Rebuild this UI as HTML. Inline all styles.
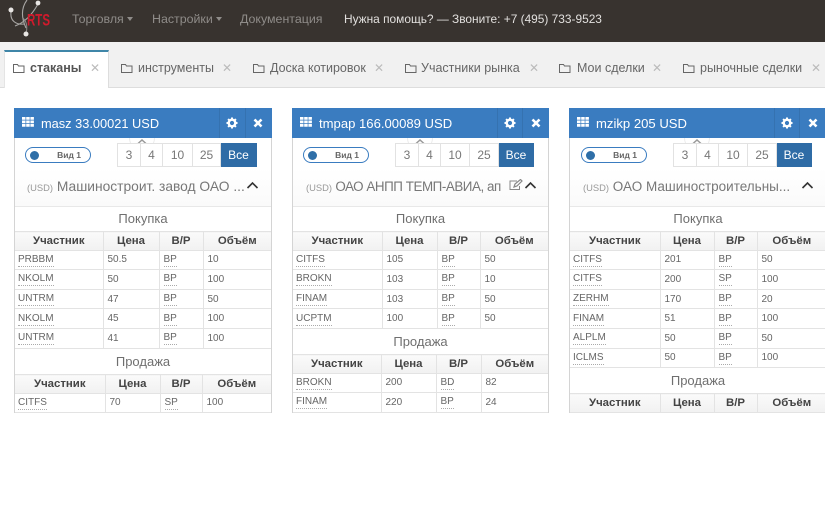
<!DOCTYPE html>
<html lang="ru"><head><meta charset="utf-8"><title>stakany</title>
<style>
*{box-sizing:border-box}
html,body{margin:0;padding:0;width:825px;height:525px;overflow:hidden;background:#fff;font-family:"Liberation Sans","DejaVu Sans",sans-serif;color:#666}
#w{position:absolute;left:0;top:0;width:825px;height:525px;overflow:hidden;filter:blur(.3px)}
.abs,.nav,.tab,.tx{position:absolute;white-space:nowrap}
#top{position:absolute;left:0;top:0;width:825px;height:42px;background:#38332f;box-shadow:0 1px 2px rgba(0,0,0,.5)}
.nav{top:12px;font-size:12.4px;line-height:15px;color:#8f8c89}
.nav i{display:inline-block;width:0;height:0;border:3.5px solid transparent;border-top:4px solid #8f8c89;border-bottom:0;margin-left:3px;vertical-align:2px}
#bar{position:absolute;left:0;top:42px;width:825px;height:46px;background:#f1f1f1;border-bottom:1px solid #ddd}
#act{position:absolute;left:4px;top:50px;width:105px;height:38px;background:#fff;border-top:2px solid #3f86a8;border-left:1px solid #e4e4e4;border-right:1px solid #ddd}
.tab{top:60px;font-size:12.5px;line-height:16px;color:#666}
.x{position:absolute;top:60px;font-size:12px;line-height:16px;color:#bbb;font-family:"DejaVu Sans",sans-serif}
.fold{position:absolute;top:63px}
.p{position:absolute;top:108px;height:305px;background:#fff;border:1px solid #d4d4d4;border-top:0}
.h{position:absolute;left:-1px;right:-1px;top:0;height:30px;background:#3a7cc0}
.h b{position:absolute;left:27px;top:7px;font-weight:400;font-size:13.1px;line-height:17px;color:#fff;white-space:nowrap}
.sep{position:absolute;top:0;width:1px;height:30px;background:#3572b0}
.up{position:absolute;top:0;width:100%;height:99px;left:0;background:linear-gradient(#fff 0,#fff 60%,#fafafa 100%);border-bottom:1px solid #e8e8e8}
.tog{position:absolute;width:66px;height:16px;top:39px;border:1px solid #3a7cc0;border-radius:9px;background:#fff;font-size:8.5px;font-weight:700;line-height:14px;color:#666;text-align:right;padding-right:9px}
.tog:before{content:"";position:absolute;left:4px;top:2.500px;width:9px;height:9px;border-radius:50%;background:#2f6fa8}
.btns{position:absolute;top:35px;height:24px;display:flex;font-size:12px;line-height:22px;text-align:center;color:#777}
.btns span{display:block;border:1px solid #e2e2e2;border-left:0;background:#fff}
.btns span:first-child{border-left:1px solid #e2e2e2}
.btns span:last-child{background:#2f6ca6;border-color:#2f6ca6;color:#fff}
.arc{position:absolute;top:30px;width:26px;height:13px;border:1px solid #ececec;border-top:0;border-radius:0 0 13px 13px;background:#fff}
.chev{position:absolute;fill:none}
.nm{position:absolute;top:70px;font-size:13.8px;line-height:17px;color:#777;white-space:nowrap}
.nm small{font-size:9.400px;color:#999;letter-spacing:0}
.ti{position:absolute;left:0;width:100%;text-align:center;font-size:13px;line-height:18px;color:#6f6f6f}
table{position:absolute;left:0;width:100%;border-collapse:collapse;table-layout:fixed;font-size:10px;color:#666}
th,td{border:1px solid #e3e3e3;padding:1px 0 0 3px;text-align:left;height:19.6px;line-height:12px;font-weight:400;overflow:hidden;white-space:nowrap}
td+td{padding-left:4px}
th{font-weight:700;color:#444;text-align:center;background:linear-gradient(#fafafa,#f1f1f1);font-size:11.400px;padding:0;height:18.6px}
th+th{padding:0}
tr>*:first-child{border-left:0}tr>*:last-child{border-right:0}
u{text-decoration:none;border-bottom:1px dotted #aaa;display:inline-block;line-height:12px}
</style></head><body><div id="w">
<div id="top">
<svg class="abs" style="left:0;top:0" width="60" height="42" viewBox="0 0 60 42" fill="none">
<path d="M27 0C21 8 21 17 26 28M38 4C33 13 26 22 15 26M11 12C10 20 15 25 24 24" stroke="#a8a6a4" stroke-width="1.100"/>
<path d="M23 18C28 23 27 30 26 33" stroke="#8d8b89" stroke-width="1"/>
<circle cx="11" cy="10" r="2.500" fill="#e8e6e4"/><circle cx="38" cy="3" r="2.400" fill="#e8e6e4"/><circle cx="26" cy="34" r="2.500" fill="#e8e6e4"/>
<text x="27" y="25.500" font-family="Liberation Sans,sans-serif" font-size="17" font-weight="700" fill="#d01a2c" textLength="23" lengthAdjust="spacingAndGlyphs">RTS</text></svg>
<div class="nav" style="left:72px">Торговля<i></i></div>
<div class="nav" style="left:152px">Настройки<i></i></div>
<div class="nav" style="left:240px">Документация</div>
<div class="nav" style="left:344px;color:#e2e0de;font-size:11.900px">Нужна помощь? — Звоните: +7 (495) 733-9523</div>
</div>
<div id="bar"></div><div id="act"></div>
<svg class="fold" style="left:13px" width="12" height="10" viewBox="0 0 12 10" fill="none" stroke="#666"><path d="M.5 1.500h4l1 1.500h5.500v6.500h-10.500z"/></svg>
<div class="tab" style="left:30px;font-weight:700;color:#555">стаканы</div><div class="x" style="left:90px">✕</div>
<svg class="fold" style="left:121px" width="12" height="10" viewBox="0 0 12 10" fill="none" stroke="#666"><path d="M.5 1.500h4l1 1.500h5.500v6.500h-10.500z"/></svg>
<div class="tab" style="left:138px">инструменты</div><div class="x" style="left:222px">✕</div>
<svg class="fold" style="left:253px" width="12" height="10" viewBox="0 0 12 10" fill="none" stroke="#666"><path d="M.5 1.500h4l1 1.500h5.500v6.500h-10.500z"/></svg>
<div class="tab" style="left:270px">Доска котировок</div><div class="x" style="left:374px">✕</div>
<svg class="fold" style="left:405px" width="12" height="10" viewBox="0 0 12 10" fill="none" stroke="#666"><path d="M.5 1.500h4l1 1.500h5.500v6.500h-10.500z"/></svg>
<div class="tab" style="left:421px">Участники рынка</div><div class="x" style="left:529px">✕</div>
<svg class="fold" style="left:559px" width="12" height="10" viewBox="0 0 12 10" fill="none" stroke="#666"><path d="M.5 1.500h4l1 1.500h5.500v6.500h-10.500z"/></svg>
<div class="tab" style="left:577px">Мои сделки</div><div class="x" style="left:652px">✕</div>
<svg class="fold" style="left:683px" width="12" height="10" viewBox="0 0 12 10" fill="none" stroke="#666"><path d="M.5 1.500h4l1 1.500h5.500v6.500h-10.500z"/></svg>
<div class="tab" style="left:700px">рыночные сделки</div><div class="x" style="left:811px">✕</div>

<!-- panel 1 -->
<div class="p" style="left:14px;width:258px">
<div class="up"></div>
<div class="h"><svg class="abs" style="left:8px;top:9px" width="12" height="10" fill="#fff" viewBox="0 0 12 10"><path d="M0 0h3.500v2.800H0zM4.200 0h3.500v2.800H4.200zM8.400 0h3.500v2.800H8.400zM0 3.500h3.500v2.800H0zM4.200 3.500h3.500v2.800H4.200zM8.400 3.500h3.500v2.800H8.400zM0 7h3.500v2.800H0zM4.200 7h3.500v2.800H4.200zM8.400 7h3.500v2.800H8.400z"/></svg><b style="font-size:12.800px">masz 33.00021 USD</b><div class="sep" style="left:205px"></div><div class="sep" style="left:231px"></div>
<svg class="abs" style="left:212px;top:9px" width="12" height="12" viewBox="0 0 12 12"><circle cx="6" cy="6" r="3.300" fill="none" stroke="#fff" stroke-width="2.400"/><path d="M6 .500v2M6 9.500v2M.5 6h2M9.500 6h2M2.100 2.100l1.400 1.400M8.500 8.500l1.400 1.400M2.100 9.900l1.400-1.400M8.500 3.500l1.400-1.400" stroke="#fff" stroke-width="2"/></svg>
<svg class="abs" style="left:239px;top:10px" width="10" height="10" viewBox="0 0 10 10"><path d="M1.500 1.500l7 7M8.500 1.500l-7 7" stroke="#fff" stroke-width="2.600"/></svg></div>
<div class="arc" style="left:114px"></div><svg class="chev" style="left:121px;top:30px;position:absolute" width="12" height="8" viewBox="0 0 12 8"><path d="M1.500 6l4.500-4 4.500 4" stroke="#999" stroke-width="1.500" fill="none"/></svg>
<div class="tog" style="left:10px">Вид 1</div>
<div class="btns" style="left:102px"><span style="width:24px">3</span><span style="width:22px">4</span><span style="width:30px">10</span><span style="width:28px">25</span><span style="width:36px">Все</span></div>
<div class="nm" style="left:12px"><small>(USD)</small> Машиностроит. завод ОАО ...</div>
<svg class="chev" style="left:231px;top:73px;position:absolute" width="13" height="9" viewBox="0 0 13 9"><path d="M1.500 7l5-5 5 5" stroke="#333" stroke-width="1.600" fill="none"/></svg>
<div class="ti" style="top:102px">Покупка</div>
<table style="top:123px"><colgroup><col style="width:88px"><col style="width:56px"><col style="width:44px"><col></colgroup>
<tr><th>Участник</th><th>Цена</th><th>В/Р</th><th>Объём</th></tr>
<tr><td><u>PRBBM</u></td><td>50.5</td><td><u>BP</u></td><td>10</td></tr>
<tr><td><u>NKOLM</u></td><td>50</td><td><u>BP</u></td><td>100</td></tr>
<tr><td><u>UNTRM</u></td><td>47</td><td><u>BP</u></td><td>50</td></tr>
<tr><td><u>NKOLM</u></td><td>45</td><td><u>BP</u></td><td>100</td></tr>
<tr><td><u>UNTRM</u></td><td>41</td><td><u>BP</u></td><td>100</td></tr></table>
<div class="ti" style="top:245px">Продажа</div>
<table style="top:266px"><colgroup><col style="width:90px"><col style="width:55px"><col style="width:42px"><col></colgroup>
<tr><th>Участник</th><th>Цена</th><th>В/Р</th><th>Объём</th></tr>
<tr><td><u>CITFS</u></td><td>70</td><td><u>SP</u></td><td>100</td></tr></table>
</div>

<!-- panel 2 -->
<div class="p" style="left:292px;width:257px">
<div class="up"></div>
<div class="h"><svg class="abs" style="left:8px;top:9px" width="12" height="10" fill="#fff" viewBox="0 0 12 10"><path d="M0 0h3.500v2.800H0zM4.200 0h3.500v2.800H4.200zM8.400 0h3.500v2.800H8.400zM0 3.500h3.500v2.800H0zM4.200 3.500h3.500v2.800H4.200zM8.400 3.500h3.500v2.800H8.400zM0 7h3.500v2.800H0zM4.200 7h3.500v2.800H4.200zM8.400 7h3.500v2.800H8.400z"/></svg><b>tmpap 166.00089 USD</b><div class="sep" style="left:205px"></div><div class="sep" style="left:230px"></div>
<svg class="abs" style="left:212px;top:9px" width="12" height="12" viewBox="0 0 12 12"><circle cx="6" cy="6" r="3.300" fill="none" stroke="#fff" stroke-width="2.400"/><path d="M6 .500v2M6 9.500v2M.5 6h2M9.500 6h2M2.100 2.100l1.400 1.400M8.500 8.500l1.400 1.400M2.100 9.900l1.400-1.400M8.500 3.500l1.400-1.400" stroke="#fff" stroke-width="2"/></svg>
<svg class="abs" style="left:239px;top:10px" width="10" height="10" viewBox="0 0 10 10"><path d="M1.500 1.500l7 7M8.500 1.500l-7 7" stroke="#fff" stroke-width="2.600"/></svg></div>
<div class="arc" style="left:114px"></div><svg class="chev" style="left:121px;top:30px;position:absolute" width="12" height="8" viewBox="0 0 12 8"><path d="M1.500 6l4.500-4 4.500 4" stroke="#999" stroke-width="1.500" fill="none"/></svg>
<div class="tog" style="left:10px">Вид 1</div>
<div class="btns" style="left:102px"><span style="width:24px">3</span><span style="width:22px">4</span><span style="width:29px">10</span><span style="width:29px">25</span><span style="width:35px">Все</span></div>
<div class="nm" style="left:13px;font-size:13.400px;letter-spacing:-.45px"><small>(USD)</small> ОАО АНПП ТЕМП-АВИА, ап</div>
<svg class="abs" style="left:216px;top:71px" width="14" height="12" viewBox="0 0 14 12" fill="none" stroke="#888"><path d="M10.500 7v3.500h-9.500v-8.500h7"/><path d="M5 8l1-3 5.500-4.500 1.500 1.500-5 5z" stroke-width="1.200"/></svg>
<svg class="chev" style="left:231px;top:73px;position:absolute" width="13" height="9" viewBox="0 0 13 9"><path d="M1.500 7l5-5 5 5" stroke="#333" stroke-width="1.600" fill="none"/></svg>
<div class="ti" style="top:102px">Покупка</div>
<table style="top:123px"><colgroup><col style="width:89px"><col style="width:55px"><col style="width:43px"><col></colgroup>
<tr><th>Участник</th><th>Цена</th><th>В/Р</th><th>Объём</th></tr>
<tr><td><u>CITFS</u></td><td>105</td><td><u>BP</u></td><td>50</td></tr>
<tr><td><u>BROKN</u></td><td>103</td><td><u>BP</u></td><td>10</td></tr>
<tr><td><u>FINAM</u></td><td>103</td><td><u>BP</u></td><td>50</td></tr>
<tr><td><u>UCPTM</u></td><td>100</td><td><u>BP</u></td><td>50</td></tr></table>
<div class="ti" style="top:225px">Продажа</div>
<table style="top:246px"><colgroup><col style="width:88px"><col style="width:55px"><col style="width:45px"><col></colgroup>
<tr><th>Участник</th><th>Цена</th><th>В/Р</th><th>Объём</th></tr>
<tr><td><u>BROKN</u></td><td>200</td><td><u>BD</u></td><td>82</td></tr>
<tr><td><u>FINAM</u></td><td>220</td><td><u>BP</u></td><td>24</td></tr></table>
</div>

<!-- panel 3 -->
<div class="p" style="left:569px;width:258px">
<div class="up"></div>
<div class="h"><svg class="abs" style="left:8px;top:9px" width="12" height="10" fill="#fff" viewBox="0 0 12 10"><path d="M0 0h3.500v2.800H0zM4.200 0h3.500v2.800H4.200zM8.400 0h3.500v2.800H8.400zM0 3.500h3.500v2.800H0zM4.200 3.500h3.500v2.800H4.200zM8.400 3.500h3.500v2.800H8.400zM0 7h3.500v2.800H0zM4.200 7h3.500v2.800H4.200zM8.400 7h3.500v2.800H8.400z"/></svg><b>mzikp 205 USD</b><div class="sep" style="left:205px"></div><div class="sep" style="left:230px"></div>
<svg class="abs" style="left:212px;top:9px" width="12" height="12" viewBox="0 0 12 12"><circle cx="6" cy="6" r="3.300" fill="none" stroke="#fff" stroke-width="2.400"/><path d="M6 .500v2M6 9.500v2M.5 6h2M9.500 6h2M2.100 2.100l1.400 1.400M8.500 8.500l1.400 1.400M2.100 9.900l1.400-1.400M8.500 3.500l1.400-1.400" stroke="#fff" stroke-width="2"/></svg>
<svg class="abs" style="left:239px;top:10px" width="10" height="10" viewBox="0 0 10 10"><path d="M1.500 1.500l7 7M8.500 1.500l-7 7" stroke="#fff" stroke-width="2.600"/></svg></div>
<div class="arc" style="left:114px"></div><svg class="chev" style="left:121px;top:30px;position:absolute" width="12" height="8" viewBox="0 0 12 8"><path d="M1.500 6l4.500-4 4.500 4" stroke="#999" stroke-width="1.500" fill="none"/></svg>
<div class="tog" style="left:11px">Вид 1</div>
<div class="btns" style="left:103px"><span style="width:24px">3</span><span style="width:22px">4</span><span style="width:29px">10</span><span style="width:29px">25</span><span style="width:35px">Все</span></div>
<div class="nm" style="left:13px;font-size:13.500px"><small>(USD)</small> ОАО Машиностроительны...</div>
<svg class="chev" style="left:231px;top:73px;position:absolute" width="13" height="9" viewBox="0 0 13 9"><path d="M1.500 7l5-5 5 5" stroke="#333" stroke-width="1.600" fill="none"/></svg>
<div class="ti" style="top:102px">Покупка</div>
<table style="top:123px"><colgroup><col style="width:90px"><col style="width:54px"><col style="width:43px"><col></colgroup>
<tr><th>Участник</th><th>Цена</th><th>В/Р</th><th>Объём</th></tr>
<tr><td><u>CITFS</u></td><td>201</td><td><u>BP</u></td><td>50</td></tr>
<tr><td><u>CITFS</u></td><td>200</td><td><u>SP</u></td><td>100</td></tr>
<tr><td><u>ZERHM</u></td><td>170</td><td><u>BP</u></td><td>20</td></tr>
<tr><td><u>FINAM</u></td><td>51</td><td><u>BP</u></td><td>100</td></tr>
<tr><td><u>ALPLM</u></td><td>50</td><td><u>BP</u></td><td>50</td></tr>
<tr><td><u>ICLMS</u></td><td>50</td><td><u>BP</u></td><td>100</td></tr></table>
<div class="ti" style="top:264px">Продажа</div>
<table style="top:285px"><colgroup><col style="width:90px"><col style="width:54px"><col style="width:43px"><col></colgroup>
<tr><th>Участник</th><th>Цена</th><th>В/Р</th><th>Объём</th></tr></table>
</div>
</div></body></html>
